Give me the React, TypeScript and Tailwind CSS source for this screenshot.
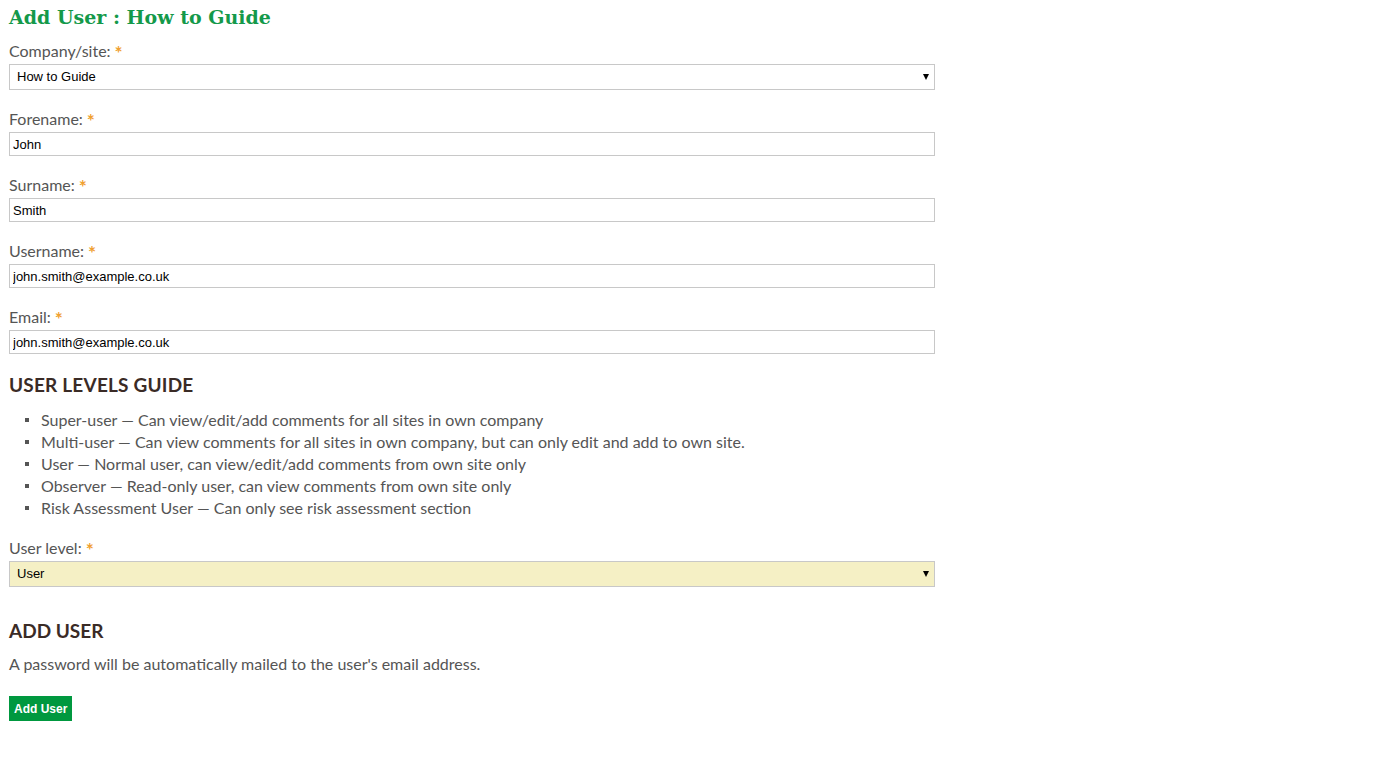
import { ReactNode } from 'react';

const body = { fontFamily: 'Lato, "Open Sans", sans-serif' };

function Label({ children }: { children: ReactNode }) {
    return (
        <label className="block h-[20px] text-[16px] leading-[20px] text-[#555] mb-[3px]">
            {children}
            <span className="relative top-[3px] text-[#f0a030] font-bold text-[19px] leading-[0] ml-[4px]">*</span>
        </label>
    );
}

function TextField({ label, value }: { label: string; value: string }) {
    return (
        <div className="mb-[19px]">
            <Label>{label}:</Label>
            <input
                readOnly
                value={value}
                className="block w-[926px] h-[24px] border border-[#c8c8c8] bg-white px-[3px] text-[13px] text-black outline-none"
                style={{ fontFamily: '"Liberation Sans", Arial, sans-serif' }}
            />
        </div>
    );
}

function SelectField({ value, tint }: { value: string; tint?: boolean }) {
    return (
        <div className="relative w-[926px]">
            <select
                value={value}
                onChange={() => {}}
                className={`block w-full h-[26px] appearance-none border border-[#c8c8c8] pl-[7px] text-[13px] text-black outline-none ${tint ? 'bg-[#f5f0c5]' : 'bg-white'}`}
                style={{ fontFamily: '"Liberation Sans", Arial, sans-serif' }}
            >
                <option>{value}</option>
            </select>
            <span className="pointer-events-none absolute right-[6px] top-[10px] h-0 w-0 border-l-[3.5px] border-r-[3.5px] border-t-[6px] border-l-transparent border-r-transparent border-t-black" />
        </div>
    );
}

const levels = [
    'Super-user — Can view/edit/add comments for all sites in own company',
    'Multi-user — Can view comments for all sites in own company, but can only edit and add to own site.',
    'User — Normal user, can view/edit/add comments from own site only',
    'Observer — Read-only user, can view comments from own site only',
    'Risk Assessment User — Can only see risk assessment section',
];

export default function App() {
    return (
        <div className="min-h-screen bg-white px-[9px] pt-[3px]" style={body}>
            <h1
                className="text-[19px] leading-[28px] font-bold text-[#14994a] mb-[10px]"
                style={{ fontFamily: '"DejaVu Serif", "Liberation Serif", serif' }}
            >
                Add User : How to Guide
            </h1>

            <div className="mb-[19px]">
                <Label>Company/site:</Label>
                <SelectField value="How to Guide" />
            </div>

            <TextField label="Forename" value="John" />
            <TextField label="Surname" value="Smith" />
            <TextField label="Username" value="john.smith@example.co.uk" />
            <TextField label="Email" value="john.smith@example.co.uk" />

            <h2 className="text-[19px] leading-[24px] font-bold tracking-[0.2px] text-[#3a2b26] uppercase mb-[12px]">
                User levels guide
            </h2>
            <ul className="pl-[32px] mb-[19px]">
                {levels.map((l) => (
                    <li key={l} className="relative text-[16px] leading-[22px] text-[#555]">
                        <span className="absolute -left-[16px] top-[9px] h-[4px] w-[4px] bg-[#555]" />
                        {l}
                    </li>
                ))}
            </ul>

            <Label>User level:</Label>
            <SelectField value="User" tint />

            <h2 className="text-[19px] leading-[24px] font-bold text-[#3a2b26] uppercase mt-[32px] mb-[11px]">
                Add user
            </h2>
            <p className="text-[16px] leading-[20px] text-[#555] mb-[22px]">
                A password will be automatically mailed to the user's email address.
            </p>
            <button
                className="block h-[25px] px-[5px] bg-[#00983f] text-white text-[12px] font-bold"
                style={{ fontFamily: '"Liberation Sans", Arial, sans-serif' }}
            >
                Add User
            </button>
        </div>
    );
}
